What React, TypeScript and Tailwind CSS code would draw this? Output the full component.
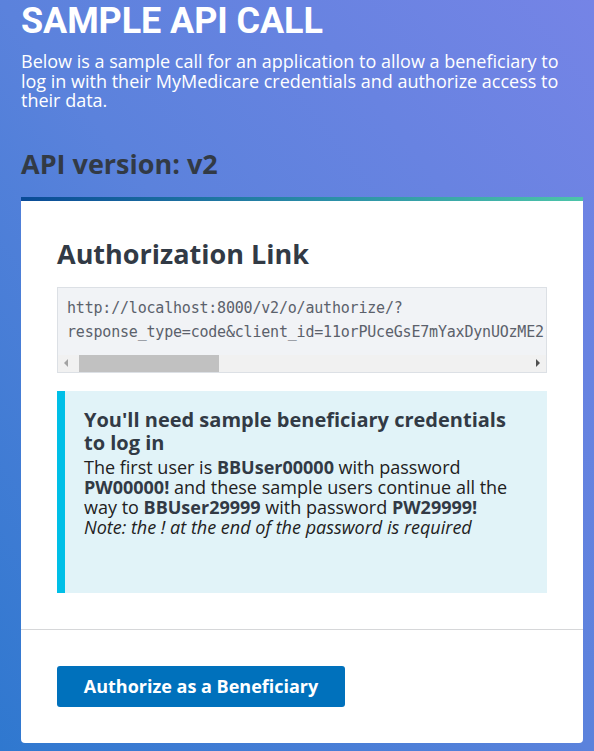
import React from "react";

export default function App() {
  return (
    <div className="min-h-[751px] w-full bg-[linear-gradient(to_top_right,#2f78cf,#5b82dc_50%,#7584e6)] pl-[21px] pr-[11px] pb-[8px] overflow-hidden">
      <h1 className="font-['Roboto',sans-serif] font-bold text-white text-[36px] leading-[40px] pt-[1px] tracking-[-0.1px]">
        SAMPLE API CALL
      </h1>
      <p className="font-['Open_Sans',sans-serif] text-white text-[18px] leading-[19.5px] mt-[11px] pr-[10px]">
        Below is a sample call for an application to allow a beneficiary to log in with their MyMedicare credentials and authorize access to their data.
      </p>
      <h2 className="font-['Open_Sans',sans-serif] font-bold text-[#323a45] text-[27px] leading-[32px] mt-[37px]">
        API version: v2
      </h2>
      <div className="mt-[17px] bg-white rounded-b-[4px] overflow-hidden">
        <div className="h-[4px] bg-[linear-gradient(to_right,#0a4b97,#2b8fa7_55%,#4cc5a9)]" />
        <div className="px-[36px] pt-[37px] pb-[36px]">
          <h3 className="font-['Open_Sans',sans-serif] font-bold text-[#323a45] text-[27px] leading-[32px]">
            Authorization Link
          </h3>
          <div className="mt-[17px] border border-[#dce0e5] bg-[#f1f3f6]">
            <div className="overflow-hidden whitespace-nowrap font-['DejaVu_Sans_Mono',monospace] text-[15px] tracking-[-0.2px] leading-[24px] text-[#5b616b] pl-[9px] pt-[8px] pb-[11px]">
              <div>http://localhost:8000/v2/o/authorize/?</div>
              <div>response_type=code&amp;client_id=11orPUceGsE7mYaxDynUOzME2</div>
            </div>
            <div className="h-[17px] bg-[#f1f1f1] flex items-center">
              <div className="w-[17px] h-[17px] flex items-center justify-center">
                <svg width="5" height="8" viewBox="0 0 5 8"><path d="M4 0 L0 4 L4 8 Z" fill="#a3a3a3" /></svg>
              </div>
              <div className="ml-[4px] w-[140px] h-[17px] bg-[#c1c1c1]" />
              <div className="flex-1" />
              <div className="w-[17px] h-[17px] flex items-center justify-center">
                <svg width="5" height="8" viewBox="0 0 5 8"><path d="M1 0 L5 4 L1 8 Z" fill="#505050" /></svg>
              </div>
            </div>
          </div>
          <div className="mt-[18px] bg-[#e1f3f8] border-l-[8px] border-[#00bfe7] pl-[19px] pr-[20px] pt-[17px] h-[202px]">
            <div className="font-['Open_Sans',sans-serif] font-bold text-[#323a45] text-[20px] leading-[23px]">
              You'll need sample beneficiary credentials to log in
            </div>
            <p className="font-['Open_Sans',sans-serif] text-[#212121] text-[18px] leading-[20px] mt-[3px]">
              The first user is <b className="text-[#323a45]">BBUser00000</b> with password <b className="text-[#323a45]">PW00000!</b> and these sample users continue all the way to <b className="text-[#323a45]">BBUser29999</b> with password <b className="text-[#323a45]">PW29999!</b>
              <br />
              <i>Note: the ! at the end of the password is required</i>
            </p>
          </div>
        </div>
        <div className="h-[1px] bg-[#d6d7d9]" />
        <div className="px-[36px] pt-[36px] pb-[36px]">
          <button className="bg-[#0071bc] text-white font-['Open_Sans',sans-serif] font-bold text-[18px] rounded-[3px] w-[288px] h-[41px]">
            Authorize as a Beneficiary
          </button>
        </div>
      </div>
    </div>
  );
}
